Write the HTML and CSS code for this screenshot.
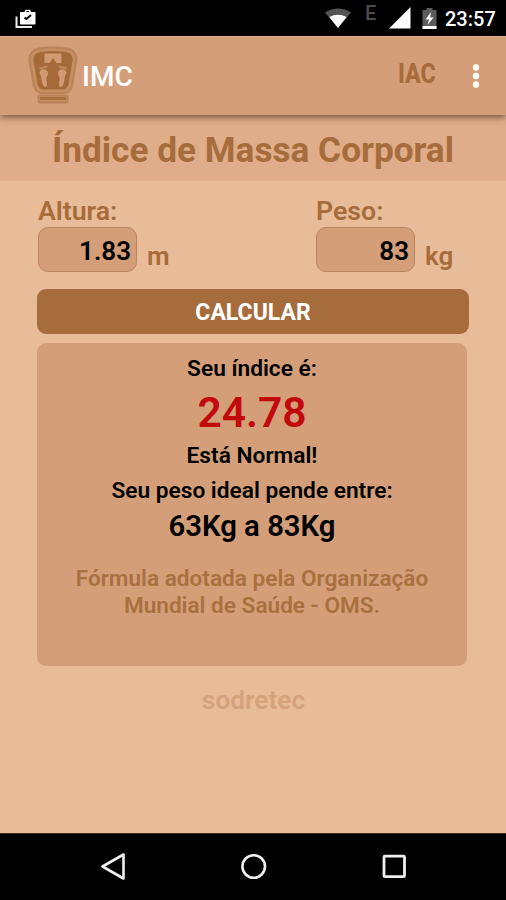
FILE: index.html
```html
<!DOCTYPE html>
<html lang="pt-BR">
<head>
<meta charset="utf-8">
<title>IMC</title>
<link rel="stylesheet" href="styles.css">
</head>
<body>
<div class="screen">
  <div class="status">
    <svg class="status-work" width="22" height="22" viewBox="0 0 22 22">
      <path d="M1.500 7.500V18H17" fill="none" stroke="#eee" stroke-width="2"/>
      <path fill="#fff" fill-rule="evenodd" d="M6 3H9.500L10.500 .8H15L16 3H19.500Q20.500 3 20.500 4V14.500Q20.500 15.500 19.500 15.500H6Q5 15.500 5 14.500V4Q5 3 6 3ZM11.200 3H14.300L13.700 2H11.800Z"/>
      <path d="M9.500 8.500L11.500 10L16 6" fill="none" stroke="#000" stroke-width="2"/>
    </svg>
    <svg class="status-wifi" width="26" height="20" viewBox="0 0 26 20">
      <path fill="#555" d="M0 4.500Q13-3.500 26 4.500L13 20Z"/>
      <path fill="#fff" d="M4.300 9Q13 4.500 21.500 9L13 20Z"/>
    </svg>
    <span class="status-net">E</span>
    <svg class="status-signal" width="22" height="22" viewBox="0 0 22 22"><path fill="#fff" d="M21.500 0V21.500H0Z"/></svg>
    <svg class="status-battery" width="15" height="21" viewBox="0 0 15 21">
      <path fill="#5c5c5c" d="M4.500 0H10.500V2H14.500V21H.5V2H4.500Z"/>
      <path fill="#fff" d="M9 4L3.500 11.500H7L5.500 17L11.500 9.500H8.200ZM.5 18H14.500V21H.5Z"/>
    </svg>
    <span class="status-time">23:57</span>
  </div>
  <header class="appbar">
    <svg class="logo" width="50" height="58" viewBox="0 0 50 58">
      <path d="M11 2.500Q25 .5 39 2.500C45 3.500 49 8 48 15L44 40Q42 46.500 37 47H13Q8 46.500 6 40L1.500 15C1 8 5 3.500 11 2.500Z" fill="#c58e63" stroke="#b98258" stroke-width="2"/>
      <path d="M12 6Q25 4 38 6Q45.500 7.500 44.500 15L40.500 38Q39 43.500 35 43.500H15Q11 43.500 9.500 38L5.500 15Q4.500 7.500 12 6Z" fill="#a66a38"/>
      <path d="M16.500 7.500H33.500V17H28.500L25 12L21.500 17H16.500Z" fill="#d09a72"/>
      <path d="M11.500 27C11.500 22 19.500 22 20 27C20 30.500 17.500 31 18.500 35C20.500 40 17 43 15 39C13 35 14 31 11.500 27ZM38.500 27C38.500 22 30.500 22 30 27C30 30.500 32.500 31 31.500 35C29.500 40 33 43 35 39C37 35 36 31 38.500 27Z" fill="#d09a72"/>
      <path d="M11.500 22.500L19.500 20.500M38.500 22.500L30.500 20.500" stroke="#c18c62" stroke-width="2"/>
      <rect x="10.500" y="49.500" width="29" height="7" rx="1.500" fill="#c58e63" stroke="#b98258" stroke-width="2"/>
      <rect x="12" y="51" width="26" height="3" fill="#aa713f"/>
    </svg>
    <h1 class="app-name">IMC</h1>
    <span class="app-action">IAC</span>
    <svg class="more" width="8" height="24" viewBox="0 0 8 24" fill="#fff"><circle cx="4" cy="3.500" r="3.200"/><circle cx="4" cy="12" r="3.200"/><circle cx="4" cy="20.500" r="3.200"/></svg>
  </header>
  <h2 class="title"><span>Índice de Massa Corporal</span></h2>
  <main class="content">
    <div class="fields">
      <div class="field">
        <label class="label" for="height">Altura:</label>
        <div class="entry"><input class="input" id="height" value="1.83"><span class="unit">m</span></div>
      </div>
      <div class="field">
        <label class="label" for="weight">Peso:</label>
        <div class="entry"><input class="input" id="weight" value="83"><span class="unit">kg</span></div>
      </div>
    </div>
    <button class="calculate">CALCULAR</button>
    <section class="result">
      <p class="line intro">Seu índice é:</p>
      <p class="value">24.78</p>
      <p class="line state">Está Normal!</p>
      <p class="line ideal">Seu peso ideal pende entre:</p>
      <p class="range">63Kg a 83Kg</p>
      <p class="note">Fórmula adotada pela Organização<br>Mundial de Saúde - OMS.</p>
    </section>
    <p class="brand">sodretec</p>
  </main>
  <nav class="navbar">
    <svg width="28" height="30" viewBox="0 0 28 30"><path d="M23.500 3.500V27.500L2.500 15.500Z" fill="none" stroke="#eee" stroke-width="2.600" stroke-linejoin="round"/></svg>
    <svg width="28" height="30" viewBox="0 0 28 30"><circle cx="13.700" cy="15.500" r="11.300" fill="none" stroke="#eee" stroke-width="2.600"/></svg>
    <svg width="28" height="30" viewBox="0 0 28 30"><rect x="4" y="5.200" width="20.500" height="20.500" rx="1" fill="none" stroke="#eee" stroke-width="2.800"/></svg>
  </nav>
</div>
</body>
</html>
```
FILE: styles.css
```css
* { box-sizing: border-box; }
body { margin: 0; font-family: Roboto, "Liberation Sans", sans-serif; font-weight: 500; background: #000; }
h1, h2, p { margin: 0; font-weight: 500; }
svg { display: block; flex: none; }
.screen { width: 506px; height: 900px; display: flex; flex-direction: column; background: #e8bc98; overflow: hidden; }
.status { height: 36px; flex: none; background: #000; display: flex; align-items: flex-start; padding-left: 15px; color: #fff; white-space: nowrap; }
.status-work { margin-top: 9px; }
.status-wifi { margin: 8px 0 0 288px; }
.status-net { width: 13px; margin: 3px 0 0 14px; font-size: 20px; line-height: 20px; color: #4c4c4c; }
.status-signal { margin: 7px 0 0 11px; }
.status-battery { margin: 8px 0 0 11px; }
.status-time { margin: 8px 0 0 8px; font-size: 20px; line-height: 22px; }
.appbar { height: 79px; flex: none; background: #d49e79; border-top: 1px solid #dfad87; display: flex; align-items: flex-start; padding-left: 28px; box-shadow: 0 2px 7px rgba(70, 40, 20, .7); z-index: 1; }
.logo { margin-top: 9px; }
.app-name { margin: 23px 0 0 4px; width: 60px; font-size: 28px; line-height: 34px; color: #fff; }
.app-action { margin: 20px 0 0 256px; width: 41px; font-size: 28px; line-height: 34px; font-weight: 800; color: #a66c3b; transform: scaleX(.83); transform-origin: left; }
.more { margin: 27px 0 0 33px; }
.title { height: 66px; flex: none; background: #dfad89; color: #a66c3b; text-align: center; font-size: 35.200px; line-height: 71px; font-weight: 700; white-space: nowrap; }
.content { flex: 1; padding: 15px 38px 0 37px; }
.fields { display: grid; grid-template-columns: 278px 1fr; }
.field { padding-left: 1px; }
.label { display: block; font-size: 26.700px; line-height: 30px; color: #a66c3b; font-weight: 600; white-space: nowrap; }
.entry { display: flex; margin-top: 1px; }
.input { width: 99px; height: 45px; border: 1px solid #b88560; border-radius: 10px; background: #d49e79; padding: 2px 5px 0 0; text-align: right; font: 600 26px Roboto, sans-serif; color: #000; }
.unit { margin: 15px 0 0 10px; font-size: 26px; line-height: 28px; color: #a66c3b; font-weight: 600; }
.calculate { display: block; width: 432px; height: 45px; margin-top: 17px; border: 0; border-radius: 9px; background: #a66c3b; color: #fff; font: 700 23px Roboto, sans-serif; padding: 1px 0 0; }
.result { width: 430px; height: 323px; margin-top: 9px; background: #d49e79; border-radius: 9px; text-align: center; color: #000; padding-top: 12px; white-space: nowrap; }
.line { font-size: 22.700px; line-height: 28px; font-weight: 600; }
.value { font-size: 42.500px; line-height: 48px; margin-top: 6px; color: #c20a0d; font-weight: 600; }
.state { margin-top: 5px; }
.ideal { margin-top: 7px; }
.range { font-size: 29.300px; line-height: 34px; margin-top: 4px; font-weight: 600; }
.note { font-size: 22.600px; line-height: 27px; margin-top: 22px; color: #a9703f; font-weight: 600; }
.brand { margin-top: 18px; padding-left: 2px; text-align: center; font-size: 26.300px; line-height: 32px; color: #d6a27c; font-weight: 600; }
.navbar { height: 67px; flex: none; background: #000; border-top: 1px solid #3f2c20; display: flex; gap: 112px; padding: 17px 0 0 100px; }
```
